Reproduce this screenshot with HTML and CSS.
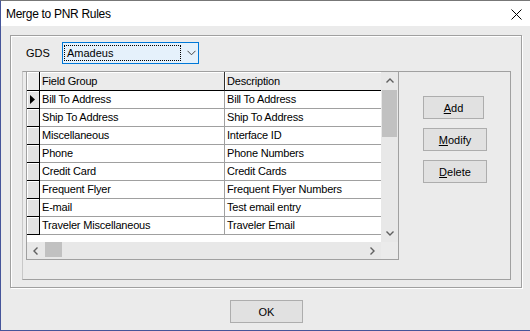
FILE: index.html
```html
<!DOCTYPE html>
<html>
<head>
<meta charset="utf-8">
<link rel="stylesheet" href="styles.css">
</head>
<body>
<div class="window">
  <div class="titlebar">
    <span class="title">Merge to PNR Rules</span>
    <svg class="close" width="11" height="11" viewBox="0 0 11 11"><path d="M0.5 0.5L10.5 10.5M10.5 0.5L0.5 10.5" stroke="#000" stroke-width="1" fill="none"/></svg>
  </div>
  <div class="content">
    <div class="group">
      <div class="gds-row">
        <span class="gds-label">GDS</span>
        <div class="combo">
          <span class="combo-focus">Amadeus</span>
          <svg class="combo-arrow" width="9" height="6" viewBox="0 0 9 6"><path d="M0.5 0.8L4.5 4.8L8.5 0.8" stroke="#444" stroke-width="1" fill="none"/></svg>
        </div>
      </div>
      <div class="panel">
        <div class="grid">
          <div class="grid-main">
            <div class="table">
              <div class="row head">
                <div class="rh"></div>
                <div class="c1">Field Group</div>
                <div class="c2">Description</div>
              </div>
              <div class="row">
                <div class="rh"><svg class="tri" width="5" height="9" viewBox="0 0 5 9"><path d="M0 0L5 4.5L0 9Z" fill="#000"/></svg></div>
                <div class="c1">Bill To Address</div>
                <div class="c2">Bill To Address</div>
              </div>
              <div class="row"><div class="rh"></div><div class="c1">Ship To Address</div><div class="c2">Ship To Address</div></div>
              <div class="row"><div class="rh"></div><div class="c1">Miscellaneous</div><div class="c2">Interface ID</div></div>
              <div class="row"><div class="rh"></div><div class="c1">Phone</div><div class="c2">Phone Numbers</div></div>
              <div class="row"><div class="rh"></div><div class="c1">Credit Card</div><div class="c2">Credit Cards</div></div>
              <div class="row"><div class="rh"></div><div class="c1">Frequent Flyer</div><div class="c2">Frequent Flyer Numbers</div></div>
              <div class="row"><div class="rh"></div><div class="c1">E-mail</div><div class="c2">Test email entry</div></div>
              <div class="row"><div class="rh"></div><div class="c1">Traveler Miscellaneous</div><div class="c2">Traveler Email</div></div>
              <div class="blank"></div>
            </div>
            <div class="vscroll">
              <div class="sb-btn"><svg width="8" height="5" viewBox="0 0 8 5"><path d="M0.5 4.5L4 1L7.5 4.5" stroke="#606060" stroke-width="1.4" fill="none"/></svg></div>
              <div class="vthumb"></div>
              <div class="vtrack"></div>
              <div class="sb-btn"><svg width="8" height="5" viewBox="0 0 8 5"><path d="M0.5 0.5L4 4L7.5 0.5" stroke="#606060" stroke-width="1.4" fill="none"/></svg></div>
            </div>
          </div>
          <div class="hscroll-row">
            <div class="hscroll">
              <div class="sb-btn"><svg width="5" height="8" viewBox="0 0 5 8"><path d="M4.5 0.5L1 4L4.5 7.5" stroke="#606060" stroke-width="1.4" fill="none"/></svg></div>
              <div class="hthumb"></div>
              <div class="htrack"></div>
              <div class="sb-btn"><svg width="5" height="8" viewBox="0 0 5 8"><path d="M0.5 0.5L4 4L0.5 7.5" stroke="#606060" stroke-width="1.4" fill="none"/></svg></div>
            </div>
            <div class="corner"></div>
          </div>
        </div>
        <div class="buttons">
          <div class="btn add"><u>A</u>dd</div>
          <div class="btn wide"><u>M</u>odify</div>
          <div class="btn wide"><u>D</u>elete</div>
        </div>
      </div>
    </div>
    <div class="footer">
      <div class="btn ok">OK</div>
    </div>
  </div>
</div>
</body>
</html>
```

FILE: styles.css
```css
* { box-sizing: border-box; }
html, body { margin: 0; padding: 0; }
body {
  width: 530px;
  height: 331px;
  overflow: hidden;
  font-family: "Liberation Sans", Arial, sans-serif;
  font-size: 11px;
  color: #000;
}
.window {
  width: 530px;
  height: 331px;
  border-top: 1px solid #777;
  border-left: 1px solid #45559a;
  border-bottom: 1px solid #45559a;
  background: #ebebeb;
  display: flex;
  flex-direction: column;
}
.titlebar {
  height: 25px;
  background: #fff;
  display: flex;
  align-items: center;
  justify-content: space-between;
  padding: 1px 8px 0 5px;
}
.title {
  font-size: 12px;
  letter-spacing: -0.3px;
}
.close { display: block; }
.content {
  padding: 9px 0 0 9px;
}
.group {
  width: 512px;
  height: 253px;
  border: 1px solid #a0a0a0;
  box-shadow: inset 1px 1px 0 #fff, 1px 1px 0 #fff;
  padding: 6px 0 0 11px;
}
.gds-row {
  display: flex;
  align-items: center;
  height: 22px;
}
.gds-label {
  width: 40px;
  padding-left: 4px;
}
.combo {
  width: 137px;
  height: 22px;
  border: 1px solid #0078d7;
  background: #e5f1fb;
  display: flex;
  align-items: center;
  padding: 0 0 0 1px;
}
.combo-focus {
  width: 117px;
  height: 16px;
  border: 1px dotted #000;
  line-height: 14px;
  padding-left: 2px;
}
.combo-arrow {
  margin-left: 6px;
  display: block;
}
.panel {
  margin-top: 7px;
  width: 489px;
  height: 209px;
  border: 1px solid #a0a0a0;
  border-left-color: #c8c8c8;
  padding-left: 3px;
  display: flex;
}
.grid {
  width: 373px;
  height: 188px;
  border: 1px solid #a0a0a0;
  border-top: none;
  display: flex;
  flex-direction: column;
}
.grid-main {
  display: flex;
  height: 170px;
}
.table {
  width: 354px;
  background: #fff;
  display: flex;
  flex-direction: column;
}
.row {
  display: flex;
  height: 18px;
  line-height: 17px;
  white-space: nowrap;
}
.rh {
  width: 13px;
  background: #e3e3e3;
  border-right: 1px solid #000;
  border-bottom: 1px solid #000;
  box-shadow: inset 1px 1px 0 #fff;
  display: flex;
  align-items: center;
  padding-left: 3px;
}
.tri { display: block; }
.c1 {
  width: 185px;
  border-right: 1px solid #a0a0a0;
  border-bottom: 1px solid #a0a0a0;
  padding-left: 2px;
  letter-spacing: -0.2px;
}
.c2 {
  width: 156px;
  border-bottom: 1px solid #a0a0a0;
  padding-left: 2px;
  letter-spacing: -0.2px;
}
.row.head {
  height: 19px;
  line-height: 18px;
}
.row.head .rh,
.row.head .c1,
.row.head .c2 {
  background: #ebebeb;
  border-bottom: 1px solid #000;
}
.row.head .c1 {
  border-right: 1px solid #303030;
  box-shadow: inset 1px 1px 0 #fff;
}
.row.head .c2 {
  box-shadow: inset 1px 1px 0 #fff;
}
.blank { flex: 1; }
.vscroll {
  width: 17px;
  background: #e8e8e8;
  display: flex;
  flex-direction: column;
}
.sb-btn {
  width: 17px;
  height: 17px;
  display: flex;
  align-items: center;
  justify-content: center;
  flex: none;
}
.sb-btn svg { display: block; }
.vthumb {
  margin: 1px 1px 0 1px;
  height: 47px;
  background: #c1c1c1;
}
.vtrack { flex: 1; }
.hscroll-row {
  display: flex;
  height: 17px;
}
.hscroll {
  width: 354px;
  background: #e8e8e8;
  display: flex;
}
.hthumb {
  margin: 0 0 2px 1px;
  width: 17px;
  background: #c1c1c1;
}
.htrack { flex: 1; }
.corner {
  width: 17px;
  background: #ebebeb;
}
.buttons {
  margin: 24px 0 0 24px;
  display: flex;
  flex-direction: column;
  gap: 9px;
}
.btn {
  height: 23px;
  border: 1px solid #adadad;
  background: #e1e1e1;
  display: flex;
  align-items: center;
  justify-content: center;
  font-size: 11px;
}
.btn u { text-decoration: underline; }
.btn.add { width: 61px; }
.btn.wide { width: 64px; }
.footer {
  margin-top: 12px;
  display: flex;
  padding-left: 220px;
}
.btn.ok { width: 73px; }
```
